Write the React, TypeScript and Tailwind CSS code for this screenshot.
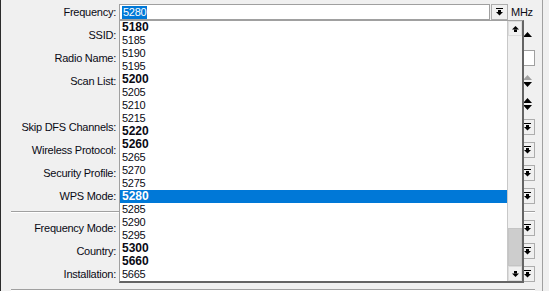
import React from 'react';

const freqs = [
  { v: '5180', b: true },
  { v: '5185' },
  { v: '5190' },
  { v: '5195' },
  { v: '5200', b: true },
  { v: '5205' },
  { v: '5210' },
  { v: '5215' },
  { v: '5220', b: true },
  { v: '5260', b: true },
  { v: '5265' },
  { v: '5270' },
  { v: '5275' },
  { v: '5280', b: true, sel: true },
  { v: '5285' },
  { v: '5290' },
  { v: '5295' },
  { v: '5300', b: true },
  { v: '5660', b: true },
  { v: '5665' },
];

function DropIcon() {
  return (
    <svg width="7" height="8" viewBox="0 0 7 8" className="block">
      <rect x="0" y="0" width="7" height="1" fill="#000" />
      <rect x="2" y="2" width="3" height="2" fill="#000" />
      <polygon points="0,4 7,4 3.5,7.5" fill="#000" />
    </svg>
  );
}

function ArrowUp() {
  return (
    <svg width="7" height="6" viewBox="0 0 7 6" className="block">
      <polygon points="3.5,0 7,3.5 0,3.5" fill="#000" />
      <rect x="2" y="3.5" width="3" height="2.5" fill="#000" />
    </svg>
  );
}

function ArrowDown() {
  return (
    <svg width="7" height="6" viewBox="0 0 7 6" className="block">
      <rect x="2" y="0" width="3" height="2.5" fill="#000" />
      <polygon points="0,2.5 7,2.5 3.5,6" fill="#000" />
    </svg>
  );
}

function Tri({ up, color = '#000' }: { up?: boolean; color?: string }) {
  return (
    <svg width="9" height="5" viewBox="0 0 9 5" className="block">
      {up ? (
        <polygon points="4.5,0 9,5 0,5" fill={color} />
      ) : (
        <polygon points="0,0 9,0 4.5,5" fill={color} />
      )}
    </svg>
  );
}

function DropButton() {
  return (
    <div className="flex h-[16px] w-[16px] items-center justify-center border border-[#adadad] bg-[#f0f0f0]">
      <DropIcon />
    </div>
  );
}

function Row({ label, children }: { label?: string; children?: React.ReactNode }) {
  return (
    <div className="flex h-[16px] items-center">
      <div className="w-[115px] shrink-0 text-right leading-[16px]">{label}</div>
      <div className="ml-[3px] flex h-full flex-1 items-center">{children}</div>
    </div>
  );
}

function Field() {
  return <div className="h-full flex-1 border border-[#a0a0a0] bg-white" />;
}

function Separator() {
  return <div className="ml-[10px] h-[2px] border-t border-[#a0a0a0] border-b border-b-white" />;
}

export default function App() {
  return (
    <div className="relative h-[291px] w-[549px] overflow-hidden border-l border-[#2b2b2b] bg-[#f0f0f0] font-['Liberation_Sans',Arial,sans-serif] text-[11px] tracking-[-0.25px] text-[#0a0a14]">
      <div className="flex h-full">
        <div className="flex w-[534px] flex-col gap-[7px] pt-[4px]">
          <Row label="Frequency:">
            <div className="flex h-full w-[371px] items-center border border-[#a0a0a0] bg-white pl-[2px]">
              <span className="bg-[#0078d7] px-[1px] leading-[13px] text-white">5280</span>
            </div>
            <div className="ml-[1px] flex h-full w-[17px] items-center justify-center border border-[#adadad] bg-[#f0f0f0]">
              <DropIcon />
            </div>
            <span className="ml-[3px] leading-[16px]">MHz</span>
          </Row>
          <Row label="SSID:">
            <Field />
            <div className="ml-[4px] mr-[3px] pb-[1px]">
              <Tri up />
            </div>
          </Row>
          <Row label="Radio Name:">
            <Field />
          </Row>
          <Row label="Scan List:">
            <Field />
            <div className="ml-[4px] mr-[3px] flex flex-col gap-[2px]">
              <Tri up color="#a0a0a0" />
              <Tri />
            </div>
          </Row>
          <Row>
            <Field />
            <div className="ml-[4px] mr-[3px] flex flex-col gap-[2px]">
              <Tri up />
              <Tri />
            </div>
          </Row>
          <Row label="Skip DFS Channels:">
            <Field />
            <DropButton />
          </Row>
          <Row label="Wireless Protocol:">
            <Field />
            <DropButton />
          </Row>
          <Row label="Security Profile:">
            <Field />
            <DropButton />
          </Row>
          <Row label="WPS Mode:">
            <Field />
            <DropButton />
          </Row>
          <Separator />
          <Row label="Frequency Mode:">
            <Field />
            <DropButton />
          </Row>
          <Row label="Country:">
            <Field />
            <DropButton />
          </Row>
          <Row label="Installation:">
            <Field />
            <DropButton />
          </Row>
          <Separator />
        </div>
        <div className="ml-[7px] w-px bg-[#a0a0a0]" />
      </div>

      {/* frequency dropdown list */}
      <div className="absolute left-[118px] top-[20px] flex w-[405px] border-t border-l border-[#a0a0a0] border-r-2 border-b-2 border-r-[#646464] border-b-[#646464] bg-white">
        <div className="flex-1">
          {freqs.map((f) => (
            <div
              key={f.v}
              className={
                'h-[13px] pl-[2px] leading-[13px] ' +
                (f.b ? 'text-[12px] font-bold tracking-[0px] ' : '') +
                (f.sel ? 'bg-[#0078d7] text-white' : 'text-[#0a0a14]')
              }
            >
              {f.v}
            </div>
          ))}
        </div>
        <div className="flex w-[15px] flex-col border-l border-[#c8c8c8] bg-[#f0f0f0]">
          <div className="flex h-[15px] items-center justify-center border border-[#dcdcdc] bg-[#f0f0f0]">
            <ArrowUp />
          </div>
          <div className="flex flex-1 flex-col justify-end">
            <div className="h-[38px] border border-[#c4c4c4] bg-[#cdcdcd]" />
          </div>
          <div className="flex h-[15px] items-center justify-center border border-[#dcdcdc] bg-[#f0f0f0]">
            <ArrowDown />
          </div>
        </div>
      </div>
    </div>
  );
}
